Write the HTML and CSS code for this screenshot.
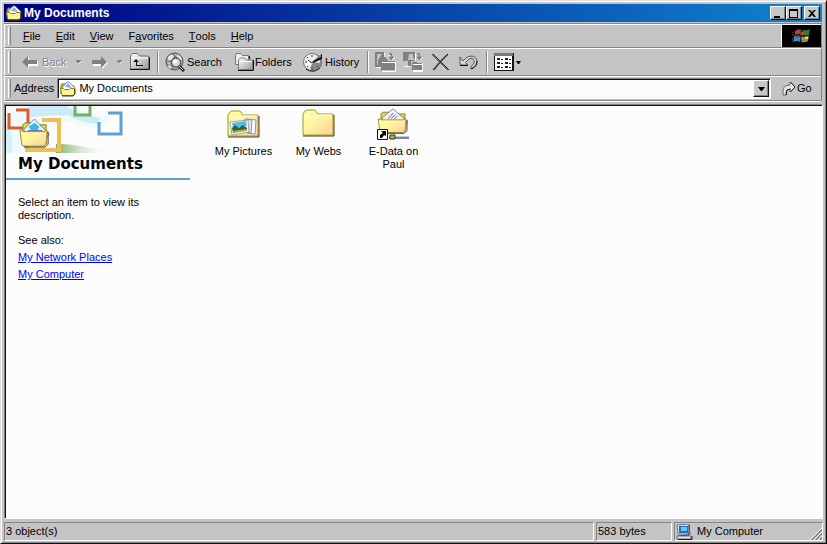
FILE: index.html
```html
<!DOCTYPE html>
<html lang="en">
<head>
<meta charset="utf-8">
<title>My Documents</title>
<link rel="stylesheet" href="styles.css">
</head>
<body>
<svg class="defs" aria-hidden="true">
  <defs>
    <linearGradient id="paper" x1="0" y1="0" x2="1" y2="1"><stop offset="0" stop-color="#ffff9c"/><stop offset=".45" stop-color="#fdf4a0"/><stop offset="1" stop-color="#fbcf9c"/></linearGradient>
    <linearGradient id="steel" x1="0" y1="0" x2="1" y2="1"><stop offset="0" stop-color="#fff"/><stop offset="1" stop-color="#999"/></linearGradient>
    <linearGradient id="grass" x1="0" y1="0" x2="1" y2="0"><stop offset="0" stop-color="#7fae62"/><stop offset="1" stop-color="#fcfdfc" stop-opacity="0"/></linearGradient>
    <symbol id="docs" viewBox="0 0 16 16">
      <path d="M1 5l1-2h3l1 2h8v8H1z" fill="#d8cc40" stroke="#6a6410"/>
      <path d="M2 7l5-6h2l6 6-2 4H3z" fill="#fff" stroke="#7c84b8"/>
      <path d="M5 6l3-4 4 5z" fill="#88b0e8"/>
      <path d="M0.500 7.500h3l1 1h5l1-1h4v6l-2 1H2z" fill="#fff494" stroke="#8c8418"/>
      <path d="M2 15h11l2-2V8" fill="none" stroke="#3c380c"/>
    </symbol>
    <symbol id="folder" viewBox="0 0 33 28">
      <path d="M1 26V5l2-3 2-1h8l3 4h15v21z" fill="url(#paper)" stroke="#a09830"/>
      <path d="M2 8h12l3-2h13" fill="none" stroke="#fffff0"/>
      <path d="M1 27h31V6" fill="none" stroke="#45400f"/>
    </symbol>
    <symbol id="open" viewBox="0 0 32 32">
      <path d="M4 14V7l2-2h6l2 2h14v20H6z" fill="#e4d450" stroke="#86801c"/>
      <path d="M5 12L16 1l15 16-5 6H9z" fill="#f4f7ff" stroke="#7880a8"/>
      <path d="M16 4l8 8H8z" fill="#e6ecf8"/>
    </symbol>
    <symbol id="front" viewBox="0 0 32 32">
      <path d="M1 13h2l1 1h23l1-1h1l-1 13-2 3H5l-2-1z" fill="url(#paper)" stroke="#98902c"/>
      <path d="M5 30h22l3-3V14" fill="none" stroke="#3c380c"/>
    </symbol>
  </defs>
</svg>
<main class="window">
  <header class="title">
    <svg width="16" height="16"><use href="#docs"/></svg>
    <h1>My Documents</h1>
    <div class="controls">
      <button aria-label="Minimize"><svg width="10" height="9" viewBox="0 0 10 9"><path d="M1 7h6v2H1z"/></svg></button>
      <button aria-label="Maximize"><svg width="10" height="9" viewBox="0 0 10 9"><path d="M0 0h9v9H0zM1 2v6h7V2z" fill-rule="evenodd"/></svg></button>
      <button class="close" aria-label="Close"><svg width="10" height="9" viewBox="0 0 10 9"><path d="M1 1h2l2 2 2-2h2L6 4l3 4H7L5 6 3 8H1l3-4z"/></svg></button>
    </div>
  </header>

  <section class="bars">
    <nav class="band menu">
      <i class="grip"></i>
      <button><u>F</u>ile</button><button><u>E</u>dit</button><button><u>V</u>iew</button><button>F<u>a</u>vorites</button><button><u>T</u>ools</button><button><u>H</u>elp</button>
      <div class="flag">
        <svg width="20" height="18" viewBox="0 0 20 18">
          <path d="M3 4q4-3 7-1l-1 5q-3-2-6 0z" fill="#a84830"/><path d="M11 3q4 1 7-1l-1 6q-4 1-7 0z" fill="#347c3c"/>
          <path d="M2 9q4-2 7 0l-1 6q-3-2-6 0z" fill="#4880b8"/><path d="M10 9q3 2 7 0l-1 5q-3 2-7 1z" fill="#a08838"/>
          <path d="M8 5h3v3H8z" fill="#f05030"/><path d="M13 9h3v3h-3z" fill="#f4d840"/><path d="M9 10h3v3H9z" fill="#50a0e8"/><path d="M1 5v1M0 8h2M1 11v2M0 14h2" stroke="#805050"/>
          <path d="M9 3v12M3 9h13" stroke="#222"/>
        </svg>
      </div>
    </nav>

    <div class="band tools">
      <i class="grip"></i>
      <button class="back" disabled><svg width="16" height="13" viewBox="0 0 16 13"><path d="M1 7l6-6v4h9v5H7v3z" fill="#fff"/><path d="M0 6l6-6v4h9v4H6v4z" fill="#808080"/></svg><span>Back</span></button>
      <button class="drop" disabled aria-label="Back list"><svg width="6" height="4" viewBox="0 0 6 4"><path d="M1 1h5L3 4z" fill="#fff"/><path d="M0 0h5v1L3 3H2L0 1z" fill="#808080"/></svg></button>
      <button class="forward" disabled aria-label="Forward"><svg width="17" height="13" viewBox="0 0 17 13"><path d="M1 5h9V1l6 6-6 6v-3H1z" fill="#fff"/><path d="M0 4h9V0l6 6-6 6V8H0z" fill="#808080"/></svg></button>
      <button class="drop" disabled aria-label="Forward list"><svg width="6" height="4" viewBox="0 0 6 4"><path d="M1 1h5L3 4z" fill="#fff"/><path d="M0 0h5v1L3 3H2L0 1z" fill="#808080"/></svg></button>
      <button class="up" aria-label="Up"><svg width="20" height="18" viewBox="0 0 20 18"><path d="M.5 16V3l2-2.500h5L10 3h8.500v13z" fill="url(#steel)" stroke="#707070"/><path d="M1.500 5h17" stroke="#fff"/><path d="M0 16.500h19.500V4" fill="none" stroke="#111"/><path d="M3 9l3-3 3 3H7v3h6v1H6V9z" fill="#111"/></svg></button>
      <i class="sep"></i>
      <button class="search"><svg width="21" height="21" viewBox="0 0 21 21"><circle cx="9.500" cy="9.500" r="8.500" fill="#a9a9a9" stroke="#505050"/><path d="M3 5l4-3 3 2-3 4-4 1zM12 2l4 3 1 4-3-1-2-3zM3 11l4 2-1 4-3-2z" fill="#e6e6e6"/><path d="M1 9h5l4-5M7 2l4 3 5 4M2 13h5v5" fill="none" stroke="#686868"/><circle cx="11" cy="10.500" r="4.500" fill="#d8d8d8" stroke="#333" stroke-width="1"/><circle cx="10" cy="9.500" r="2" fill="#fff"/><path d="M14 14l5 5" stroke="#222" stroke-width="3"/><path d="M14 14l4 4" stroke="#ddd"/></svg><span>Search</span></button>
      <button class="folders"><svg width="19" height="18" viewBox="0 0 19 18"><path d="M.5 11.500v-9l1-2h4l2 2h6v9z" fill="#eee" stroke="#777"/><path d="M3.500 16.500V7l2-2h4l2 2h6v9.500z" fill="url(#steel)" stroke="#777"/><path d="M3 17.500h15.500V7M14.500 6V3" fill="none" stroke="#111"/><path d="M5 8.500h12" stroke="#fff"/></svg><span>Folders</span></button>
      <button class="history"><svg width="21" height="19" viewBox="0 0 21 19"><ellipse cx="10" cy="9.500" rx="9.500" ry="9" fill="#888"/><ellipse cx="9" cy="9" rx="8.500" ry="8.500" fill="#f0f0f0" stroke="#777"/><path d="M10 9l8 1q-1 6-7 8l-4-3z" fill="#888"/><path d="M9 9l10-8v5l-9 4z" fill="#111"/><path d="M10 8l8-7v3z" fill="#888"/><path d="M9 2v2M2 9h2M9 15v2M4 4l1 1M4 14l1-1M15 14l-1-1M5 7l4 3" stroke="#333"/><path d="M3 16q7 5 14-1" fill="none" stroke="#222"/></svg><span>History</span></button>
      <i class="sep"></i>
      <button class="tool" disabled aria-label="Move To"><svg width="22" height="21" viewBox="0 0 22 21"><path d="M1 15.500h5M1 1.500h9M10 2v3M13.500 3v1h3" fill="none" stroke="#fff"/><path d="M0 0h9v5h2v4H6v6H0z" fill="#808080"/><path d="M2 2h5L3 8v5H2z" fill="#c4c4c4"/><path d="M14 1.500h2.500v3M14 5h5l-2.500 3z" fill="#808080" stroke="#808080"/><path d="M19.500 5L17 8.500" stroke="#fff"/><path d="M7 20V10l2-2h3l2 2h7v10z" fill="#fff"/><path d="M6 18.500V9.500L8 7h4l1 2h7v9.500z" fill="#808080"/><path d="M7 10.500h13" stroke="#fff"/></svg></button>
      <button class="tool" disabled aria-label="Copy To"><svg width="21" height="21" viewBox="0 0 21 21"><path d="M1 14.500h6M12.500 1v8" fill="none" stroke="#fff"/><path d="M0 0h12v9H8v5H5V9H0z" fill="#808080"/><path d="M6 2h4v3l2 3H5z" fill="#c4c4c4"/><path d="M14 1.500h2.500v3M14 5h5l-2.500 3z" fill="#808080" stroke="#808080"/><path d="M19.500 5L17 8.500" stroke="#fff"/><path d="M10 20v-8l1-2h4l1 1h4v9z" fill="#fff"/><path d="M9 18v-7l1-1h4l1 1h4v7z" fill="#808080"/><path d="M10 12.500h9" stroke="#fff"/></svg></button>
      <button class="tool" aria-label="Delete"><svg width="19" height="18" viewBox="0 0 19 18"><path d="M1 1l7 7 8 9M17 1L10 8l-8 9" fill="none" stroke="#ddd" stroke-width="3"/><path d="M1 1l7 7 9 9M17 1L10 8l-8 9" fill="none" stroke="#707070" stroke-width="2"/><path d="M2 1l7 7 9 9M17 1l-7 7-7 9" fill="none" stroke="#222"/></svg></button>
      <button class="tool last" aria-label="Undo"><svg width="19" height="17" viewBox="0 0 19 17"><path d="M1 3v8h8L6.500 8.500Q10 4 13 4q3 1 2 5l-3 4v2q6-3 6-8-1-5-6-5-4 0-8 5z" fill="#d8d8d8" stroke="#555"/><path d="M1 11.500h8M12.500 15q6-3 5.500-8" fill="none" stroke="#111"/></svg></button>
      <i class="sep"></i>
      <button class="views" aria-label="Views"><svg width="20" height="18" viewBox="0 0 20 18"><path d="M0 0h20v18H0z" fill="#111"/><path d="M0 0h19v3H0z" fill="#777"/><path d="M1 3h17v14H1z" fill="#fff"/><path d="M3 5h3v2H3zM11 5h3v2h-3zM3 9h3v2H3zM11 9h3v2h-3zM3 13h3v2H3zM11 13h3v2h-3zM7 6h2v1H7zM15 6h2v1h-2zM7 10h2v1H7zM15 10h2v1h-2zM7 14h2v1H7zM15 14h2v1h-2z" fill="#222"/></svg><svg width="5" height="3" viewBox="0 0 5 3"><path d="M0 0h5L3 3H2z"/></svg></button>
    </div>

    <form class="band address">
      <i class="grip"></i>
      <label for="path">A<u>d</u>dress</label>
      <div class="combo">
        <svg width="16" height="16"><use href="#docs"/></svg>
        <input id="path" value="My Documents">
        <button class="open" type="button" aria-label="Show list"><svg width="7" height="4" viewBox="0 0 7 4"><path d="M0 0h7L4 4H3z"/></svg></button>
      </div>
      <button class="go" type="button"><svg width="14" height="15" viewBox="0 0 14 15"><path d="M8 1v3Q1 4 1 10v4h3v-3q0-3 4-3v3l5-5z" fill="#e8e8e8" stroke="#666"/><path d="M8.500 1l4.500 5-4.500 5M4.500 14v-3q0-3 4-3" fill="none" stroke="#222"/></svg><span>Go</span></button>
    </form>
  </section>

  <section class="content">
    <aside>
      <svg class="banner" width="130" height="47" viewBox="0 0 130 47">
        <path d="M0 0h68q16 10 36 11l-6 10q-20 2-35-6-22 1-34 15L20 47H0z" fill="#eefafd"/>
        <path d="M24 0h36l14 8 20 4-3 6q-20-2-29-9-18 0-38 2z" fill="#cdeaf7"/>
        <path d="M0 17q8 8 6 30H0z" fill="#d8f0fa"/>
        <path d="M50 38q18-1 55 9H50z" fill="url(#grass)"/>
        <path d="M10 4h12v18H3V7" fill="none" stroke="#dd5c24" stroke-width="3"/>
        <path d="M69 0v9h15V0" fill="none" stroke="#70b460" stroke-width="3"/>
        <path d="M102 7h13v21H93V16" fill="none" stroke="#629ed0" stroke-width="3"/>
        <path d="M36 14h17v30H21V34" fill="none" stroke="#ecc057" stroke-width="4"/>
        <svg x="12" y="12" width="33" height="31" viewBox="0 0 32 32"><use href="#open"/><path d="M16 5l5 4-2 4h-6l-3-4z" fill="#38b8ec"/><path d="M9 13h15" stroke="#5868b8"/><use href="#front"/></svg>
      </svg>
      <h2>My Documents</h2>
      <div class="info">
        <p>Select an item to view its description.</p>
        <p class="also">See also:</p>
        <a href="#network">My Network Places</a>
        <a href="#computer">My Computer</a>
      </div>
    </aside>
    <div class="files">
      <a href="#pictures"><svg width="33" height="32" viewBox="0 -2 33 32"><use href="#folder" width="33" height="28"/><path d="M20 9l9 1-1 14-8-1z" fill="#fff" stroke="#8098b0"/><path d="M18 9l7 1-1 13-5-1z" fill="#d4e8f8" stroke="#8098b0"/><path d="M3 12l18-2 1 12-17 3z" fill="#fff" stroke="#a0a0a8"/><path d="M5 13l14-2 1 5-14 3z" fill="#55b8ec"/><path d="M5 18l3-3 4 3 4-3 4 3v2L6 23z" fill="#246c38"/><path d="M6 21l14-2v2L7 23z" fill="#cca840"/></svg><span>My Pictures</span></a>
      <a href="#webs"><svg width="33" height="32" viewBox="0 -1 33 32"><use href="#folder" width="33" height="28"/></svg><span>My Webs</span></a>
      <a href="#edata"><svg width="33" height="32" viewBox="0 0 33 32"><svg width="32" height="27" viewBox="0 0 32 32" preserveAspectRatio="none"><use href="#open"/><path d="M11 13l5-7M14 13l4-5M17 13l3-3" stroke="#906868"/><use href="#front"/></svg><path d="M12 29.500h20" stroke="#7c84b0" stroke-width="3"/><path d="M12 28.500h20" stroke="#c0c8e8"/><path d="M13 27h5v4h-5z" fill="#c0b030" stroke="#333"/><path d="M.5 21.500h10v10H.5z" fill="#fff" stroke="#111"/><path d="M3 30v-3l3-2-2-2h5v5l-2-1-2 3z"/></svg><span>E-Data on Paul</span></a>
    </div>
  </section>

  <footer class="status">
    <div class="count">3 object(s)</div>
    <div class="size">583 bytes</div>
    <div class="zone"><svg width="17" height="16" viewBox="0 0 17 16"><path d="M1 1l12-1 1 10H2z" fill="#d8dcf0" stroke="#7078a8"/><path d="M3 2h9v7H3z" fill="#1870c8"/><path d="M5 3h6v4H5z" fill="#5cd0f8"/><path d="M13 1v10l-11 1" fill="none" stroke="#202860"/><path d="M1 12h14v3H1z" fill="#eee8cc" stroke="#666080"/><path d="M2 15.500h14V12" fill="none" stroke="#202040"/></svg><span>My Computer</span>
      <svg class="resize" width="12" height="12" viewBox="0 0 12 12"><path d="M0 12L12 0M4 12l8-8M8 12l4-4" stroke="#fff"/><path d="M1 12L12 1M2 12L12 2M5 12l7-7M6 12l6-6M9 12l3-3M10 12l2-2" stroke="#868686"/></svg></div>
  </footer>
</main>
</body>
</html>
```
FILE: styles.css
```css
* { box-sizing: border-box; }
body {
  margin: 0;
  font: 11px/13px "Liberation Sans", Arial, sans-serif;
  color: #000;
}
button, input { font: inherit; color: inherit; }
button { border: 0; padding: 0; background: none; display: flex; align-items: center; }
svg { display: block; flex: none; }
h1, h2, p { margin: 0; }
.defs { position: absolute; width: 0; height: 0; }

.window {
  min-height: 100vh;
  display: flex;
  flex-direction: column;
  padding: 2px 3px 2px 2px;
  background: #c4c4c4;
  border: 1px solid #e0e0e0;
  border-right-color: #111;
  border-bottom-color: #111;
  box-shadow: inset 1px 1px #fff, inset -1px -1px #858585;
}

.title {
  height: 18px;
  margin: 1px 1px 0;
  display: flex;
  align-items: center;
  gap: 2px;
  padding: 0 2px;
  color: #fff;
  background: linear-gradient(90deg, #00007f, #1084d0);
}
.title h1 { flex: 1; font-size: 12px; line-height: 18px; }
.controls { display: flex; }
.controls button {
  width: 16px;
  height: 14px;
  justify-content: center;
  background: #c8c8c8;
  border: 1px solid #fff;
  border-right-color: #111;
  border-bottom-color: #111;
  box-shadow: inset -1px -1px #858585;
}
.controls .close { margin-left: 2px; }

.bars {
  margin: 1px 1px 0;
  border: 1px solid #858585;
  border-bottom-color: #fff;
  border-left: 0;
}
.band {
  display: flex;
  align-items: center;
  padding-left: 3px;
  border: 1px solid #fff;
  border-right: 0;
  border-bottom-color: #858585;
}
.grip {
  width: 3px;
  align-self: stretch;
  margin: 2px 0;
  border-left: 1px solid #fff;
  border-right: 1px solid #858585;
}
.menu { height: 24px; }
.menu .grip { margin-right: 5px; }
.menu button { padding: 0 8px 0 7px; height: 18px; }
.flag {
  width: 40px;
  margin-left: auto;
  align-self: stretch;
  display: flex;
  align-items: center;
  justify-content: center;
  background: #000;
  border-left: 1px solid #fff;
}

.tools { height: 28px; }
.tools button { height: 22px; }
.tools span { padding-left: 1px; }
.tools .back { width: 54px; margin-left: 11px; color: #858585; text-shadow: 1px 1px #fff; }
.tools .back span { padding-left: 4px; }
.tools .drop { width: 16px; }
.tools .forward { width: 25px; }
.tools .up { width: 22px; margin-left: -3px; }
.sep {
  width: 2px;
  height: 22px;
  margin: 0 6px;
  border-left: 1px solid #858585;
  border-right: 1px solid #fff;
}
.tools .up + .sep { margin-left: 5px; }
.tools .search { width: 70px; }
.tools .folders { width: 68px; }
.tools .history { width: 58px; }
.tools .tool { width: 28px; }
.tools .last { width: 21px; }
.tools .views { gap: 2px; }

.address { height: 25px; }
.address label { padding: 0 3px; }
.combo {
  flex: 1;
  height: 21px;
  display: flex;
  align-items: center;
  padding-left: 2px;
  background: #fcfcfc;
  border: 1px solid #858585;
  border-right-color: #fff;
  border-bottom-color: #fff;
  box-shadow: inset 1px 1px #111;
}
.combo input { flex: 1; min-width: 0; border: 0; padding: 0 3px; background: none; outline: 0; }
.open {
  width: 16px;
  height: 17px;
  margin-right: 1px;
  justify-content: center;
  background: #c8c8c8;
  border: 1px solid #fff;
  border-right-color: #111;
  border-bottom-color: #111;
  box-shadow: inset -1px -1px #858585;
}
.go { width: 50px; gap: 1px; padding-left: 11px; }

.content {
  flex: 1;
  display: flex;
  margin: 2px 0 0 1px;
  background: #fcfcfc;
  border: 1px solid #858585;
  border-right-color: #fff;
  border-bottom-color: #fff;
  box-shadow: inset 1px 1px #111;
}
aside { width: 185px; padding-left: 1px; }
.banner { margin-top: 1px; }
h2 {
  padding: 1px 0 3px 12px;
  font: bold 15px/21px "DejaVu Sans", Verdana, sans-serif;
  border-bottom: 2px solid #639ccf;
}
.info { padding: 16px 12px; }
.also { margin: 12px 0 4px; }
.info a { display: table; margin-bottom: 4px; color: #00f; text-decoration: underline; }
.files { display: flex; flex: 1; padding: 3px 0 0 16px; align-items: flex-start; }
.files a {
  width: 75px;
  padding: 0 8px;
  display: flex;
  flex-direction: column;
  align-items: center;
  gap: 5px;
  color: #000;
  text-align: center;
  text-decoration: none;
}
.files a:first-child span { white-space: nowrap; }

.status { display: flex; gap: 2px; height: 19px; margin: 3px 0 0 1px; line-height: 17px; }
.status div {
  padding-left: 1px;
  border: 1px solid #858585;
  border-right-color: #fff;
  border-bottom-color: #fff;
}
.count { flex: 1; }
.size { width: 76px; }
.zone { width: 149px; display: flex; align-items: center; gap: 4px; }
.resize { margin-left: auto; align-self: flex-end; }
```
